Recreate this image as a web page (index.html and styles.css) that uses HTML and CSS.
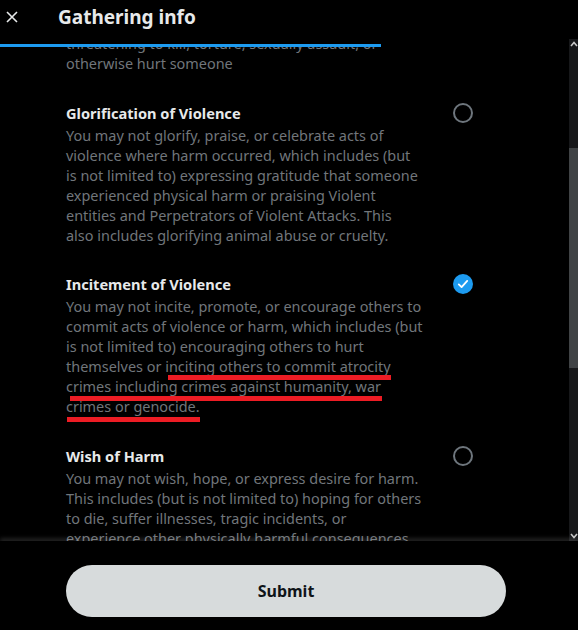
FILE: index.html
```html
<!DOCTYPE html>
<html lang="en">
<head>
  <meta charset="UTF-8" />
  <meta name="viewport" content="width=device-width, initial-scale=1.0" />
  <title>Gathering info</title>
  <link rel="stylesheet" href="styles.css">
</head>
<body>

  <div class="modal">
    <div class="top">
      <div class="main">
        <div class="head">
          <button class="close" aria-label="Close">
            <svg viewBox="0 0 12 12" width="12" height="12"><path d="M1 1 L11 11 M11 1 L1 11" stroke="#e7e9ea" stroke-width="1.6" fill="none"/></svg>
          </button>
          <h1>Gathering info</h1>
        </div>
        <div class="progress"><div class="progress-fill" style="width: 67%"></div></div>

        <div class="list">
          <div class="list-inner">
            <div class="option">
              <div class="text">
                <p class="desc">threatening to kill, torture, sexually assault, or<br>otherwise hurt someone</p>
              </div>
            </div>

            <div class="option">
              <div class="text">
                <div class="title">Glorification of Violence</div>
                <p class="desc">You may not glorify, praise, or celebrate acts of<br>violence where harm occurred, which includes (but<br>is not limited to) expressing gratitude that someone<br>experienced physical harm or praising Violent<br>entities and Perpetrators of Violent Attacks. This<br>also includes glorifying animal abuse or cruelty.</p>
              </div>
              <span class="radio"></span>
            </div>

            <div class="option marked">
              <div class="text">
                <div class="title">Incitement of Violence</div>
                <p class="desc">You may not incite, promote, or encourage others to<br>commit acts of violence or harm, which includes (but<br>is not limited to) encouraging others to hurt<br>themselves or inciting others to commit atrocity<br>crimes including crimes against humanity, war<br>crimes or genocide.</p>
              </div>
              <span class="radio checked">
                <svg viewBox="0 0 20 20" width="20" height="20"><path d="M5.8 10.4 L8.6 13.1 L14.2 6.9" stroke="#fff" stroke-width="1.8" fill="none" stroke-linecap="round" stroke-linejoin="round"/></svg>
              </span>
              <span class="mark mark-1"></span>
              <span class="mark mark-2"></span>
              <span class="mark mark-3"></span>
            </div>

            <div class="option">
              <div class="text">
                <div class="title">Wish of Harm</div>
                <p class="desc">You may not wish, hope, or express desire for harm.<br>This includes (but is not limited to) hoping for others<br>to die, suffer illnesses, tragic incidents, or<br>experience other physically harmful consequences.</p>
              </div>
              <span class="radio"></span>
            </div>
          </div>
        </div>
      </div>

      <div class="scrollbar">
        <svg class="arrow" viewBox="0 0 9 10" width="9" height="10"><path d="M2 7 L5 3.5 L8 7" stroke="#c8c8c8" stroke-width="1.6" fill="none"/></svg>
        <div class="track">
          <div class="thumb"></div>
        </div>
        <svg class="arrow" viewBox="0 0 9 10" width="9" height="10"><path d="M2 3 L5 6.5 L8 3" stroke="#c8c8c8" stroke-width="1.6" fill="none"/></svg>
      </div>
    </div>

    <div class="footer">
      <button class="submit">Submit</button>
    </div>
  </div>

</body>
</html>
```

FILE: styles.css
```css
body {
  margin: 0;
  background: #000;
  color: #e7e9ea;
  font-family: 'Noto Sans', 'Open Sans', sans-serif;
}
.modal {
  width: 578px;
  height: 630px;
  overflow: hidden;
}
.top {
  display: flex;
  height: 541px;
}
.main {
  flex: 1;
  display: flex;
  flex-direction: column;
  min-width: 0;
}
.head {
  height: 44px;
  display: flex;
  align-items: flex-start;
  padding-left: 6px;
  box-sizing: border-box;
}
.close {
  background: none;
  border: none;
  padding: 0;
  margin-top: 11px;
  width: 12px;
  height: 12px;
  line-height: 0;
  cursor: pointer;
}
.head h1 {
  margin: 4px 0 0 40px;
  font-size: 19px;
  line-height: 26px;
  font-weight: 700;
  color: #e7e9ea;
}
.progress {
  height: 3px;
  position: relative;
  z-index: 1;
}
.progress-fill {
  height: 100%;
  background: #1d9bf0;
}
.list {
  flex: 1;
  overflow: hidden;
}
.list-inner {
  margin-top: -27px;
}
.option {
  display: flex;
  align-items: flex-start;
  padding: 14px 96px 15px 66px;
  position: relative;
}
.option + .option {
  margin-top: -0.5px;
}
.text {
  flex: 1;
  min-width: 0;
}
.title {
  font-size: 14.6px;
  line-height: 20px;
  font-weight: 700;
  color: #e7e9ea;
  margin-bottom: 3px;
}
.desc {
  margin: 0;
  font-size: 14.45px;
  line-height: 20px;
  color: #71767b;
  white-space: nowrap;
}
.radio {
  width: 20px;
  height: 20px;
  box-sizing: border-box;
  border: 2px solid #6e767d;
  border-radius: 50%;
  flex-shrink: 0;
}
.radio.checked {
  border: none;
  background: #1d9bf0;
}
.radio.checked svg {
  display: block;
}
.mark {
  position: absolute;
  height: 5px;
  background: #ed1c24;
}
.mark-1 { left: 168px; top: 115px; width: 223px; }
.mark-2 { left: 70px; top: 136px; width: 312px; }
.mark-3 { left: 67px; top: 157px; width: 133px; }

.scrollbar {
  width: 9px;
  margin-top: 39px;
  height: 502px;
  background: #17181a;
  display: flex;
  flex-direction: column;
}
.arrow {
  display: block;
  flex-shrink: 0;
}
.track {
  flex: 1;
  padding-top: 99px;
}
.thumb {
  height: 220px;
  background: #404345;
}
.footer {
  height: 89px;
  padding: 24px 0 0 66px;
  box-sizing: border-box;
  background: #000;
  box-shadow: 0 -3px 4px rgba(200, 200, 200, 0.16);
  position: relative;
}
.submit {
  width: 440px;
  height: 52px;
  border: none;
  border-radius: 26px;
  background: #d7dbdc;
  color: #0f1419;
  font-family: 'Noto Sans', 'Open Sans', sans-serif;
  font-size: 16px;
  font-weight: 700;
  cursor: pointer;
}
```
